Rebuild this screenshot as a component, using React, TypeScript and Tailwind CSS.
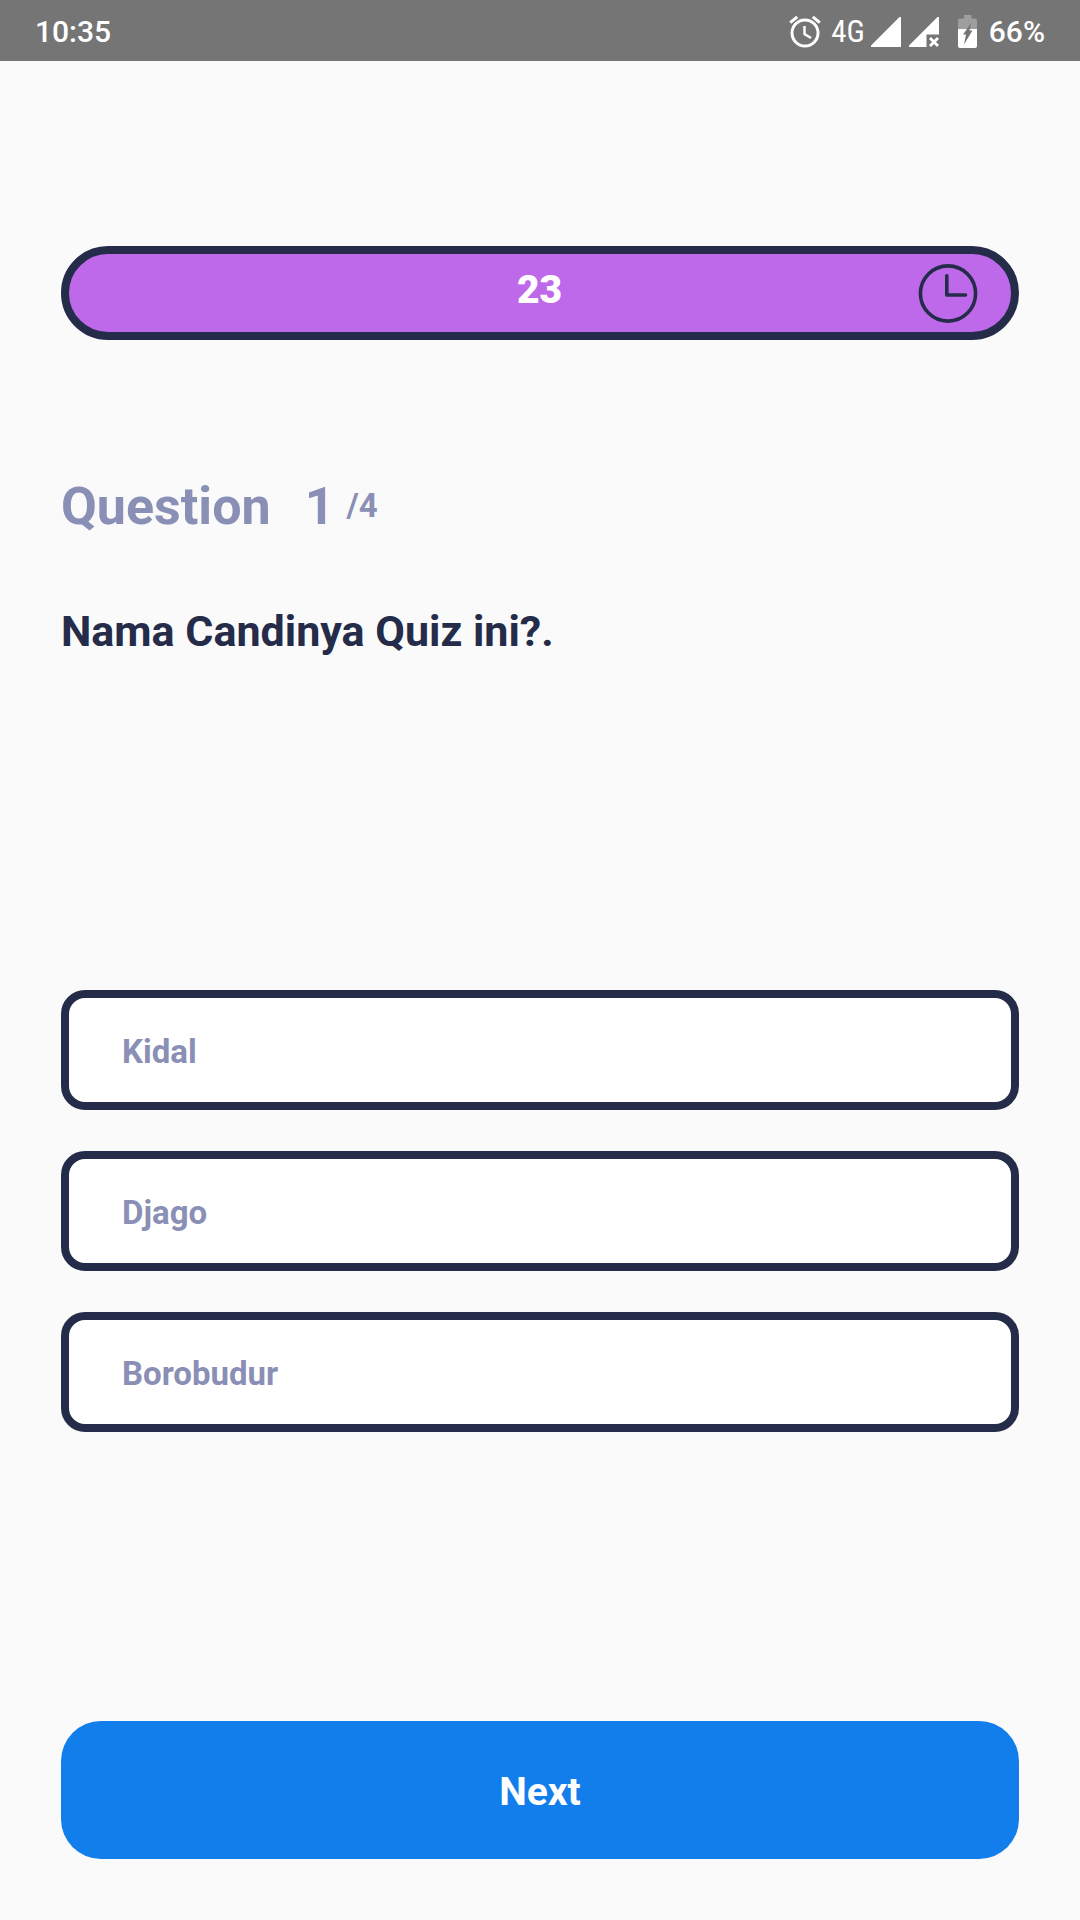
import { useState } from "react";

const options = ["Kidal", "Djago", "Borobudur"];

function AlarmIcon() {
  return (
    <svg className="h-8 w-8" viewBox="0 0 32 32" fill="none" stroke="currentColor" aria-hidden="true">
      <circle cx="16" cy="17" r="13" strokeWidth="3" />
      <path d="M15.500 10v8l6.500 4" strokeWidth="2.4" />
      <path d="M1.2 6.700 8.2 .9M23.8 .9l7 5.8" strokeWidth="3" />
    </svg>
  );
}

function SignalIcon() {
  return (
    <svg className="h-[30px] w-[30px]" viewBox="0 0 30 30" fill="currentColor" aria-hidden="true">
      <path d="M0 30v-1.5L28.5 0H30v30z" />
    </svg>
  );
}

function SignalOffIcon() {
  return (
    <svg className="h-[30px] w-[30px]" viewBox="0 0 30 30" fill="currentColor" aria-hidden="true">
      <path d="M0 30v-1.5L28.5 0H30v17.5H17.500V30z" />
      <path d="m21 21 8 8m0-8-8 8" stroke="currentColor" strokeWidth="2.8" />
    </svg>
  );
}

function BatteryIcon() {
  return (
    <svg className="h-[33px] w-[19px]" viewBox="0 0 19 33" fill="currentColor" aria-hidden="true">
      <path d="M0 14V5.500Q0 3.500 2 3.500h4V0h7.500v3.500H17q2 0 2 2V14z" opacity="0.3" />
      <path d="M0 14h19v17q0 2-2 2H2q-2 0-2-2z" />
      <path d="M13.500 7.500 11.500 15.500H14.500L6 29.500 8 19.500H5z" fill="#757575" />
    </svg>
  );
}

function ClockIcon() {
  return (
    <svg className="h-[60px] w-[60px]" viewBox="0 0 60 60" fill="none" stroke="currentColor" strokeWidth="3.6" aria-hidden="true">
      <circle cx="30" cy="30.500" r="27.600" />
      <path d="M28.800 12.700v19.300H47.500" strokeLinecap="round" strokeLinejoin="round" />
    </svg>
  );
}

function StatusBar() {
  return (
    <header className="flex h-[61px] items-center bg-[#757575] px-[35px] pt-0.5 text-[30px] leading-none font-medium text-white">
      <span className="flex-1">10:35</span>
      <AlarmIcon />
      <span className="ml-[10px] font-['Roboto_Condensed',Roboto,sans-serif] text-[31px] leading-none font-normal">4G</span>
      <span className="ml-1.5 flex gap-2">
        <SignalIcon />
        <SignalOffIcon />
      </span>
      <span className="mr-3 ml-[19px]">
        <BatteryIcon />
      </span>
      <span>66%</span>
    </header>
  );
}

export default function App() {
  const [selected, setSelected] = useState<string | null>(null);

  return (
    <div className="flex min-h-screen flex-col bg-[#fafafa] font-[Roboto,sans-serif] text-[#252c4a]">
      <StatusBar />
      <main className="flex flex-1 flex-col px-[61px] pt-[185px] pb-[61px]">
        <div className="grid h-[94px] grid-cols-[1fr_auto_1fr] items-center rounded-full border-8 border-[#252c4a] bg-[#be69ea] pr-[33px]">
          <span className="col-start-2 pb-1.5 pl-8 text-[39px] leading-none font-black text-white">23</span>
          <span className="justify-self-end">
            <ClockIcon />
          </span>
        </div>

        <h1 className="mt-[136px] flex items-center text-[52px] leading-[62px] font-bold text-[#8a8fb5]">
          <span>Question</span>
          <span className="ml-[34px]">1</span>
          <span className="ml-3 pb-1 text-[33px] leading-none">/4</span>
        </h1>
        <p className="mt-[67px] text-[43px] leading-[52px] font-bold">Nama Candinya Quiz ini?.</p>

        <div className="mt-auto flex flex-col gap-[41px]">
          {options.map((option) => (
            <button
              key={option}
              type="button"
              aria-pressed={selected === option}
              onClick={() => setSelected(option)}
              className="h-[120px] rounded-3xl border-8 border-[#252c4a] bg-white px-[53px] pt-1 text-left text-[33px] font-bold text-[#8a8fb5]"
            >
              {option}
            </button>
          ))}
        </div>

        <button
          type="button"
          className="mt-[289px] h-[138px] rounded-[40px] bg-[#127eec] pt-1 text-[39px] font-bold text-white"
        >
          Next
        </button>
      </main>
    </div>
  );
}
